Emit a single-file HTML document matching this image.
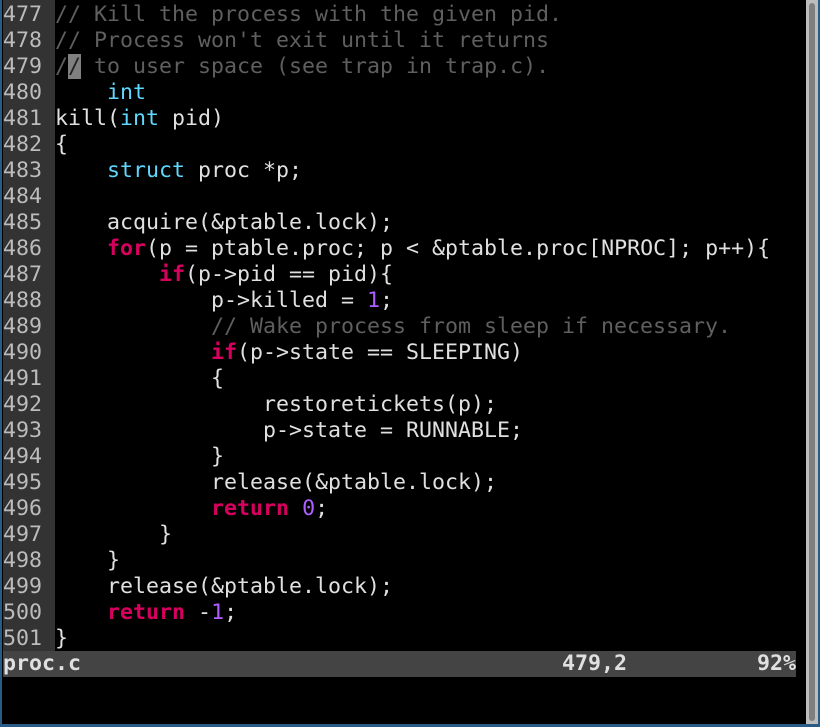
<!DOCTYPE html>
<html><head><meta charset="utf-8"><style>
html,body{margin:0;padding:0;}
body{width:820px;height:727px;background:#000;position:relative;overflow:hidden;font-family:"DejaVu Sans Mono","Liberation Mono",monospace;font-size:21.6px;}
.bl{position:absolute;left:0;top:0;width:2px;height:727px;background:#2a5a86;}
.bb{position:absolute;left:0;top:724px;width:820px;height:3px;background:#2a5a86;}
.br{position:absolute;left:818px;top:0;width:2px;height:727px;background:#2a5a86;}
.sb{position:absolute;left:806px;top:0;width:12px;height:724px;background:#bdbdbd;}
.th{position:absolute;left:809px;top:3px;width:6px;height:718px;background:#7f7f7f;border-radius:3px;}
.gut{position:absolute;left:3px;top:0;width:52px;height:651px;background:#333;}
pre{position:absolute;left:3px;top:2px;margin:0;font:inherit;line-height:26px;color:#e0e0e0;white-space:pre;}
.n{color:#bcbcbc;}
.c{color:#5f5f5f;}
.t{color:#5fd7ff;}
.k{color:#d7005f;font-weight:bold;}
.d{color:#af5fff;}
.cur{background:#808080;color:#222;}
.st{position:absolute;left:3px;top:651px;width:793px;height:26px;background:#444;color:#e0e0e0;font-weight:bold;line-height:26px;white-space:pre;}
</style></head><body>
<div class="bl"></div><div class="br"></div><div class="sb"></div><div class="th"></div>
<div class="gut"></div>
<pre><span class="n">477 </span><span class="c">// Kill the process with the given pid.</span>
<span class="n">478 </span><span class="c">// Process won't exit until it returns</span>
<span class="n">479 </span><span class="c">/</span><span class="cur">/</span><span class="c"> to user space (see trap in trap.c).</span>
<span class="n">480 </span>    <span class="t">int</span>
<span class="n">481 </span>kill(<span class="t">int</span> pid)
<span class="n">482 </span>{
<span class="n">483 </span>    <span class="t">struct</span> proc *p;
<span class="n">484 </span>
<span class="n">485 </span>    acquire(&amp;ptable.lock);
<span class="n">486 </span>    <span class="k">for</span>(p = ptable.proc; p &lt; &amp;ptable.proc[NPROC]; p++){
<span class="n">487 </span>        <span class="k">if</span>(p-&gt;pid == pid){
<span class="n">488 </span>            p-&gt;killed = <span class="d">1</span>;
<span class="n">489 </span>            <span class="c">// Wake process from sleep if necessary.</span>
<span class="n">490 </span>            <span class="k">if</span>(p-&gt;state == SLEEPING)
<span class="n">491 </span>            {
<span class="n">492 </span>                restoretickets(p);
<span class="n">493 </span>                p-&gt;state = RUNNABLE;
<span class="n">494 </span>            }
<span class="n">495 </span>            release(&amp;ptable.lock);
<span class="n">496 </span>            <span class="k">return</span> <span class="d">0</span>;
<span class="n">497 </span>        }
<span class="n">498 </span>    }
<span class="n">499 </span>    release(&amp;ptable.lock);
<span class="n">500 </span>    <span class="k">return</span> -<span class="d">1</span>;
<span class="n">501 </span>}</pre>
<div class="st">proc.c                                     479,2          92%</div>
<div class="bb"></div>
</body></html>
